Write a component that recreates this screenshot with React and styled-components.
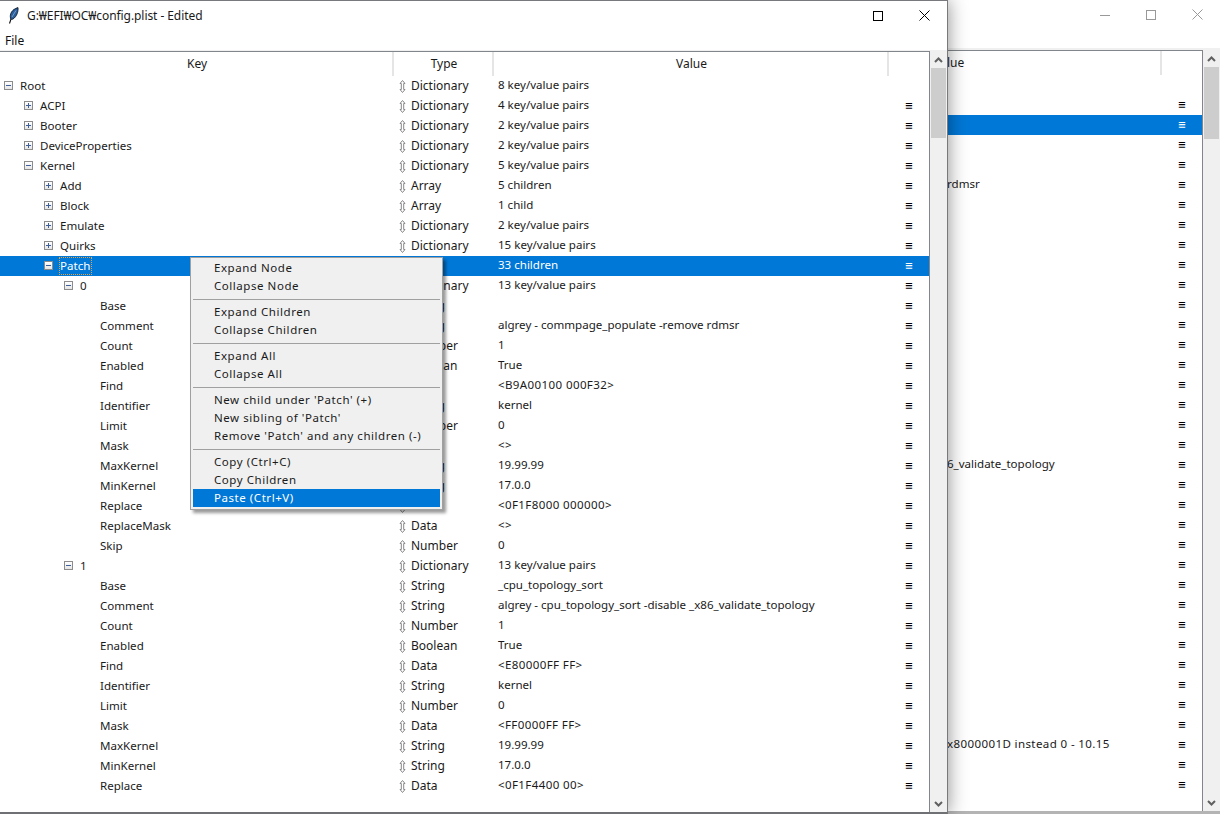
import React from "react";
import styled, { createGlobalStyle } from "styled-components";

const Global = createGlobalStyle`
  html, body { margin: 0; padding: 0; background: #fff; overflow: hidden; }
  * { box-sizing: border-box; }
  body { font-family: "Noto Sans", "Noto Sans CJK KR", "Liberation Sans", sans-serif; font-size: 12px; color: #111; }
`;

const Desktop = styled.div`
  position: relative;
  width: 1220px;
  height: 814px;
  overflow: hidden;
  background: #fff;
`;

const FrontWindow = styled.div`
  position: absolute;
  left: 0;
  top: 0;
  width: 948px;
  height: 814px;
  z-index: 2;
  display: flex;
  flex-direction: column;
  background: #fff;
  border-top: 1px solid #77797c;
  border-right: 1px solid #77797c;
  border-bottom: 2px solid #6e7073;
  box-shadow: 0 0 18px rgba(0, 0, 0, 0.45);
`;

const BackWindow = styled.div`
  position: absolute;
  left: 947px;
  top: 0;
  width: 273px;
  height: 814px;
  z-index: 1;
  display: flex;
  flex-direction: column;
  background: #fff;
  border-bottom: 3px solid #b4b4b4;
`;

const TitleBar = styled.div`
  height: 29px;
  flex: none;
  display: flex;
  align-items: center;
  padding-left: 8px;
`;

const TitleText = styled.span`
  margin-left: 8px;
  font-size: 12px;
  letter-spacing: -0.07px;
  line-height: 16px;
  color: #1a1a1a;
`;

const Spacer = styled.div`
  flex: 1;
`;

const Caption = styled.div`
  width: 46px;
  height: 29px;
  display: flex;
  align-items: center;
  justify-content: center;
`;

const MenuBar = styled.div`
  height: ${(p) => p.$h}px;
  flex: none;
  padding-left: 5px;
  font-size: 12px;
  line-height: 22px;
`;

const Body = styled.div`
  flex: 1;
  min-height: 0;
  display: flex;
  background: #f0f0f0;
  padding-top: ${(p) => p.$top}px;
`;

const Tree = styled.div`
  flex: 1;
  min-width: 0;
  background: #fff;
  border-top: 1px solid #82868c;
  border-right: 1px solid #82868c;
  overflow: hidden;
`;

const Header = styled.div`
  height: 24px;
  display: grid;
  grid-template-columns: ${(p) => p.$cols};
`;

const HeaderCell = styled.div`
  border-right: 2px solid #e5e5e5;
  padding-left: ${(p) => (p.$align ? 0 : 2)}px;
  text-align: ${(p) => p.$align || "center"};
  line-height: 24px;
  font-size: 12px;
  color: #1a1a1a;
  &:last-child { border-right: 0; }
`;

const Row = styled.div`
  height: 20px;
  display: grid;
  grid-template-columns: ${(p) => p.$cols};
  align-items: center;
  line-height: 20px;
  font-size: 11.55px;
  white-space: nowrap;
  background: ${(p) => (p.$selected ? "#0078d7" : "transparent")};
  color: ${(p) => (p.$selected ? "#fff" : "#1a1a1a")};
`;

const KeyCell = styled.div`
  display: flex;
  align-items: center;
  height: 20px;
  padding-left: ${(p) => 4 + p.$level * 20}px;
`;

const KeyLabel = styled.span`
  margin-left: ${(p) => (p.$leaf ? 16 : 7)}px;
  line-height: 16px;
  padding-right: 1px;
  outline: ${(p) => (p.$focus ? "1px dotted #e8a33d" : "none")};
`;

const ExpanderBox = styled.span`
  flex: none;
  width: 9px;
  height: 9px;
  margin-top: -1px;
  border: 1px solid #8c8c8c;
  background: linear-gradient(#fff, #e6e6e6);
  display: flex;
  align-items: center;
  justify-content: center;
`;

const TypeCell = styled.div`
  display: flex;
  align-items: center;
  padding-left: 5px;
  gap: 5px;
  font-size: 12px;
`;

const ValueCell = styled.div`
  align-self: start;
  height: 18px;
  line-height: 18px;
  padding-left: ${(p) => p.$pad ?? 4}px;
  letter-spacing: ${(p) => (p.$hex ? "0.38px" : "normal")};
  overflow: hidden;
`;

const MenuCell = styled.div`
  text-align: center;
  font-family: "DejaVu Sans", sans-serif;
  font-size: 10px;
  font-weight: 700;
  color: ${(p) => (p.$selected ? "#fff" : "#000")};
`;

const Scrollbar = styled.div`
  width: 17px;
  flex: none;
  display: flex;
  flex-direction: column;
  align-items: center;
  background: #f0f0f0;
`;

const ScrollButton = styled.div`
  height: 17px;
  flex: none;
  display: flex;
  align-items: center;
  justify-content: center;
`;

const Thumb = styled.div`
  width: 15px;
  height: ${(p) => p.$h}px;
  background: #cdcdcd;
  flex: none;
`;

const ContextMenu = styled.div`
  position: absolute;
  left: 190px;
  top: 257px;
  width: 253px;
  z-index: 3;
  padding: 1px 2px 2px;
  background: #f0f0f0;
  border: 1px solid #a0a0a0;
  box-shadow: 3px 3px 3px rgba(0, 0, 0, 0.4);
`;

const MenuItem = styled.div`
  height: 18px;
  line-height: 18px;
  padding-left: 21px;
  font-size: 11.5px;
  letter-spacing: 0.55px;
  white-space: nowrap;
  color: ${(p) => (p.$active ? "#fff" : "#1a1a1a")};
  background: ${(p) => (p.$active ? "#0078d7" : "transparent")};
`;

const Separator = styled.div`
  height: 8px;
  display: flex;
  align-items: center;
  &::before {
    content: "";
    flex: 1;
    height: 1px;
    background: #a0a0a0;
  }
`;

const Feather = () => (
  <svg width="11" height="17" viewBox="0 0 11 17">
    <path d="M1.5 16.5 L4 9" stroke="#111" strokeWidth="1.1" fill="none" />
    <path d="M2.6 11.5 C1.4 7 3.8 2.5 10 0.6 C10.4 4.5 8.8 9.6 5 12 C4 12.6 3 12.4 2.6 11.5 Z" fill="#2a5d9c" stroke="#111c2c" strokeWidth="0.9" />
    <path d="M4 10 L8 3.5" stroke="#8fb4dc" strokeWidth="0.7" fill="none" />
  </svg>
);

const Square = ({ c = "#000" }) => (
  <svg width="10" height="10" viewBox="0 0 10 10"><rect x="0.5" y="0.5" width="9" height="9" fill="none" stroke={c} /></svg>
);
const Cross = ({ c = "#000" }) => (
  <svg width="11" height="11" viewBox="0 0 11 11"><path d="M0.5 0.5 L10.5 10.5 M10.5 0.5 L0.5 10.5" stroke={c} fill="none" /></svg>
);
const Minus = ({ c = "#000" }) => (
  <svg width="10" height="10" viewBox="0 0 10 10"><path d="M0 5.5 H10" stroke={c} fill="none" /></svg>
);

const Expander = ({ open }) => (
  <ExpanderBox>
    <svg width="7" height="7" viewBox="0 0 7 7">
      <path d={open ? "M1 3.5 H6" : "M1 3.5 H6 M3.5 1 V6"} stroke="#3f5f9a" fill="none" />
    </svg>
  </ExpanderBox>
);

const TypeIcon = ({ selected }) => (
  <svg width="7" height="13" viewBox="0 0 7 13" style={{ flex: "none" }}>
    <path
      d="M3.5 0.5 L6 3.5 H4.7 V9.5 H6 L3.5 12.5 L1 9.5 H2.3 V3.5 H1 Z"
      fill="none"
      stroke={selected ? "#fff" : "#888"}
      strokeWidth="1"
    />
  </svg>
);

const ChevronUp = () => (
  <svg width="9" height="6" viewBox="0 0 9 6"><path d="M1 5 L4.5 1.5 L8 5" fill="none" stroke="#606060" strokeWidth="2" /></svg>
);
const ChevronDown = () => (
  <svg width="9" height="6" viewBox="0 0 9 6"><path d="M1 1 L4.5 4.5 L8 1" fill="none" stroke="#606060" strokeWidth="2" /></svg>
);

const patch = (base, comment, find, mask, replace, last) => [
  ["Base", 3, "String", base],
  ["Comment", 3, "String", comment],
  ["Count", 3, "Number", "1"],
  ["Enabled", 3, "Boolean", "True"],
  ["Find", 3, "Data", find],
  ["Identifier", 3, "String", "kernel"],
  ["Limit", 3, "Number", "0"],
  ["Mask", 3, "Data", mask],
  ["MaxKernel", 3, "String", "19.99.99"],
  ["MinKernel", 3, "String", "17.0.0"],
  ["Replace", 3, "Data", replace],
  ...(last ? [] : [
    ["ReplaceMask", 3, "Data", "<>"],
    ["Skip", 3, "Number", "0"],
  ]),
];

const rows = [
  ["Root", 0, "Dictionary", "8 key/value pairs", "open"],
  ["ACPI", 1, "Dictionary", "4 key/value pairs", "closed"],
  ["Booter", 1, "Dictionary", "2 key/value pairs", "closed"],
  ["DeviceProperties", 1, "Dictionary", "2 key/value pairs", "closed"],
  ["Kernel", 1, "Dictionary", "5 key/value pairs", "open"],
  ["Add", 2, "Array", "5 children", "closed"],
  ["Block", 2, "Array", "1 child", "closed"],
  ["Emulate", 2, "Dictionary", "2 key/value pairs", "closed"],
  ["Quirks", 2, "Dictionary", "15 key/value pairs", "closed"],
  ["Patch", 2, "Array", "33 children", "open"],
  ["0", 3, "Dictionary", "13 key/value pairs", "open"],
  ...patch("", "algrey - commpage_populate -remove rdmsr", "<B9A00100 000F32>", "<>", "<0F1F8000 000000>"),
  ["1", 3, "Dictionary", "13 key/value pairs", "open"],
  ...patch("_cpu_topology_sort", "algrey - cpu_topology_sort -disable _x86_validate_topology", "<E80000FF FF>", "<FF0000FF FF>", "<0F1F4400 00>", true),
].map((r) => (r[4] ? r : [r[0], 4, r[2], r[3]]));

const FRONT_COLS = "394px 100px 395px 40px";
const BACK_COLS = "215px 40px";
const backValues = { 5: "rdmsr", 19: "6_validate_topology", 33: "x8000001D instead 0 - 10.15" };

const menuGroups = [
  ["Expand Node", "Collapse Node"],
  ["Expand Children", "Collapse Children"],
  ["Expand All", "Collapse All"],
  ["New child under 'Patch' (+)", "New sibling of 'Patch'", "Remove 'Patch' and any children (-)"],
  ["Copy (Ctrl+C)", "Copy Children", "Paste (Ctrl+V)"],
];

export default function App() {
  return (
    <Desktop>
      <Global />

      <BackWindow>
        <TitleBar>
          <Spacer />
          <Caption><Minus c="#999" /></Caption>
          <Caption><Square c="#999" /></Caption>
          <Caption><Cross c="#999" /></Caption>
        </TitleBar>
        <MenuBar $h={19} />
        <Body $top={2}>
          <Tree>
            <Header $cols={BACK_COLS}>
              <HeaderCell $align="left">lue</HeaderCell>
              <HeaderCell />
            </Header>
            {rows.map((_, i) => (
              <Row key={i} $cols={BACK_COLS} $selected={i === 2}>
                <ValueCell $pad={0} $hex={i === 33}>{backValues[i] || ""}</ValueCell>
                <MenuCell $selected={i === 2}>{i === 0 ? "" : "≡"}</MenuCell>
              </Row>
            ))}
          </Tree>
          <Scrollbar>
            <ScrollButton><ChevronUp /></ScrollButton>
            <Thumb $h={72} />
            <Spacer />
            <ScrollButton><ChevronDown /></ScrollButton>
          </Scrollbar>
        </Body>
      </BackWindow>

      <FrontWindow>
        <TitleBar>
          <Feather />
          <TitleText>G:₩EFI₩OC₩config.plist - Edited</TitleText>
          <Spacer />
          <Caption><Square /></Caption>
          <Caption><Cross /></Caption>
        </TitleBar>
        <MenuBar $h={20}>File</MenuBar>
        <Body $top={1}>
          <Tree>
            <Header $cols={FRONT_COLS}>
              <HeaderCell>Key</HeaderCell>
              <HeaderCell>Type</HeaderCell>
              <HeaderCell>Value</HeaderCell>
              <HeaderCell />
            </Header>
            {rows.map(([name, level, type, value, state], i) => {
              const selected = i === 9;
              return (
                <Row key={i} $cols={FRONT_COLS} $selected={selected}>
                  <KeyCell $level={level}>
                    {state && <Expander open={state === "open"} />}
                    <KeyLabel $leaf={!state} $focus={selected}>{name}</KeyLabel>
                  </KeyCell>
                  <TypeCell>
                    <TypeIcon selected={selected} />
                    {type}
                  </TypeCell>
                  <ValueCell $hex={type === "Data"}>{value}</ValueCell>
                  <MenuCell $selected={selected}>{i === 0 ? "" : "≡"}</MenuCell>
                </Row>
              );
            })}
          </Tree>
          <Scrollbar>
            <ScrollButton><ChevronUp /></ScrollButton>
            <Thumb $h={70} />
            <Spacer />
            <ScrollButton><ChevronDown /></ScrollButton>
          </Scrollbar>
        </Body>
      </FrontWindow>

      <ContextMenu>
        {menuGroups.map((group, g) => (
          <React.Fragment key={g}>
            {g > 0 && <Separator />}
            {group.map((label) => (
              <MenuItem key={label} $active={label.startsWith("Paste")}>{label}</MenuItem>
            ))}
          </React.Fragment>
        ))}
      </ContextMenu>
    </Desktop>
  );
}
